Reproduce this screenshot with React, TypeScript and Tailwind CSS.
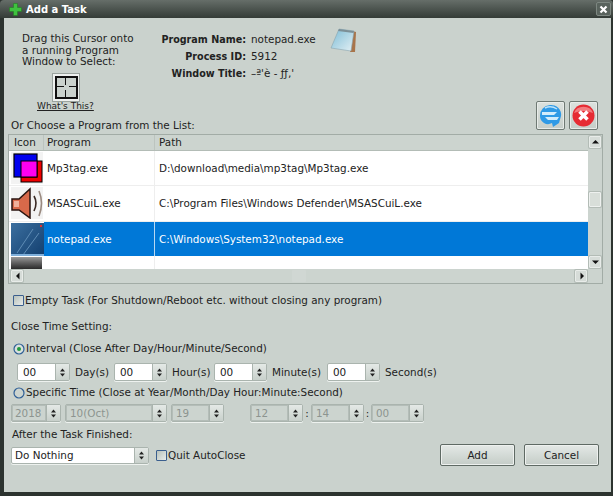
import React from "react";

const Updown = () => (
  <svg width="7" height="9" viewBox="0 0 7 9" className="block">
    <path d="M3.5 0.5 L6 3.5 H1 Z M3.5 8.5 L6 5.5 H1 Z" fill="#222" />
  </svg>
);

function Spin({ v, w, disabled, pad = "pl-[5px]", h = "h-[18px]" }: { v: string; w: string; disabled?: boolean; pad?: string; h?: string }) {
  return (
    <div className={`${w} ${h} flex shrink-0 rounded-[2px] border border-[#aab4ae] shadow-[0_1px_0_#eef2ef] ${disabled ? "bg-[#ccd4cf]" : "bg-white"}`}>
      <div className={`flex-1 flex items-center ${pad} ${disabled ? "text-[#8c9490] border border-[#b4bdb8]" : "text-[#222]"}`}>{v}</div>
      <div className="w-[14px] flex items-center justify-center bg-gradient-to-b from-[#e4e9e6] to-[#c8d0cb] border-l border-[#aab4ae]">
        <Updown />
      </div>
    </div>
  );
}

function Check({ className = "" }: { className?: string }) {
  return <div className={`w-[11px] h-[11px] shrink-0 border border-[#3a5f8e] bg-gradient-to-br from-[#b8c2bc] to-[#e8ecea] rounded-[1px] ${className}`} />;
}

function Radio({ on }: { on?: boolean }) {
  return (
    <svg width="12" height="12" viewBox="0 0 12 12" className="shrink-0">
      <circle cx="6" cy="6" r="5" fill={on ? "#d8e0dc" : "#ccd4cf"} stroke="#2f5f96" strokeWidth="1.2" />
      {on && <circle cx="6" cy="6" r="2" fill="#1f9a3c" />}
    </svg>
  );
}

const Grip = ({ d }: { d: "u" | "d" | "l" | "r" }) => {
  const p = { u: "M4.5 3 L8 6.5 H1 Z", d: "M4.5 7 L1 3.5 H8 Z", l: "M3 5 L6.5 1.5 V8.5 Z", r: "M7 5 L3.5 1.5 V8.5 Z" }[d];
  return (
    <svg width="9" height="10" viewBox="0 0 9 10">
      <path d={p} fill="#111" />
    </svg>
  );
};

const ScrollBtn = ({ d, className = "" }: { d: "u" | "d" | "l" | "r"; className?: string }) => (
  <div className={`w-[12px] h-[12px] shrink-0 flex items-center justify-center bg-[#d6dcd8] border border-[#e8ece9] shadow-[0_0_0_1px_#b3bcb6] rounded-[1px] ${className}`}>
    <Grip d={d} />
  </div>
);

function Mp3Icon() {
  return (
    <svg width="32" height="32" viewBox="0 0 32 32">
      <rect width="32" height="32" fill="#f3f3f3" />
      <rect x="10" y="9" width="21" height="21" fill="#f00000" stroke="#000" />
      <rect x="3" y="2" width="23" height="23" fill="#0000ee" stroke="#000" strokeWidth="1.2" />
      <rect x="10" y="9" width="16" height="16" fill="#ff00f0" stroke="#000" />
    </svg>
  );
}
function SpeakerIcon() {
  return (
    <svg width="32" height="32" viewBox="0 0 32 32">
      <rect width="32" height="32" fill="#f3f3f3" />
      <path d="M1 12 H8 L19 2 V31 L8 23 H1 Z" fill="#d8694a" stroke="#2a1510" strokeWidth="1.5" />
      <path d="M3 14 H8 V20 H3 Z" fill="#f0b09a" />
      <path d="M23 9 Q27 16 23 24" fill="none" stroke="#3a2a24" strokeWidth="1.6" />
      <path d="M28 4 Q33 16 28 29" fill="none" stroke="#9a8a80" strokeWidth="1.6" />
    </svg>
  );
}
function NoteBlue() {
  return (
    <svg width="33" height="34" viewBox="0 0 33 34">
      <defs>
        <linearGradient id="nb" x1="0" y1="0" x2="1" y2="1">
          <stop offset="0" stopColor="#3b6f9f" />
          <stop offset="1" stopColor="#123e6e" />
        </linearGradient>
      </defs>
      <rect width="33" height="34" fill="url(#nb)" />
      <path d="M6 30 L22 6 M12 32 L28 10" stroke="#5f8db6" strokeWidth="1" fill="none" />
      <rect x="0" y="31" width="33" height="3" fill="#7fb0dc" />
      <rect x="29" y="2" width="2" height="2" fill="#e03030" />
    </svg>
  );
}
function Notepad() {
  return (
    <svg width="28" height="26" viewBox="0 0 28 26">
      <defs>
        <linearGradient id="np" x1="0" y1="0" x2="1" y2="1">
          <stop offset="0" stopColor="#7cbcd6" />
          <stop offset="1" stopColor="#e4f0f4" />
        </linearGradient>
      </defs>
      <path d="M22 3 L26 4 L25 24 L20 24 Z" fill="#a8744a" />
      <path d="M9 1 L24 3 L21 23 L1 20 Z" fill="url(#np)" stroke="#8aa4ae" strokeWidth="0.6" />
      <path d="M9 1 L24 3 L23.5 5 L8 3 Z" fill="#7c8f96" />
    </svg>
  );
}
function RefreshIcon() {
  return (
    <svg width="23" height="24" viewBox="0 0 23 24">
      <path d="M11 1 A10 9.5 0 0 1 22 12 L20 19 L14 23 L13 19 A8 8 0 0 1 1 12 A10.5 10.5 0 0 1 11 1 Z" fill="#2f9ae6" />
      <path d="M3 8 H18 L15 11 H3 Z M20 13 H6 L9 16 H18 Z" fill="#d2ecfb" />
      <path d="M6 4 Q12 1 18 5" stroke="#bfe4fa" strokeWidth="1.4" fill="none" />
    </svg>
  );
}
function CloseIcon() {
  return (
    <svg width="23" height="23" viewBox="0 0 23 23">
      <circle cx="11.5" cy="11.5" r="11" fill="#e62b33" />
      <path d="M2 9 A10 9 0 0 1 21 9 Q11 5 2 9Z" fill="#f27c7f" />
      <path d="M7.5 7.5 L15.5 15.5 M15.5 7.5 L7.5 15.5" stroke="#fff" strokeWidth="3.6" />
    </svg>
  );
}

const ToolBtn = ({ children }: { children: React.ReactNode }) => (
  <div className="w-[29px] h-[29px] flex items-center justify-center rounded-[2px] border border-[#6f7a74] bg-gradient-to-b from-[#dce2de] to-[#c6cec9] shadow-[inset_0_0_0_1px_#e8ece9]">
    {children}
  </div>
);

const Row = ({ icon, name, path, sel, h }: { icon: React.ReactNode; name: string; path: string; sel?: boolean; h: string }) => (
  <div className={`${h} flex items-stretch ${sel ? "bg-[#0078d7] text-white" : "border-b border-[#eeeeee]"}`}>
    <div className="w-[35px] pl-[2px] pt-[1px] overflow-hidden bg-white shrink-0">{icon}</div>
    <div className={`w-[111px] pl-[3px] flex items-center border-r ${sel ? "border-[#b8d8f2]" : "border-[#eeeeee]"}`}>{name}</div>
    <div className="pl-[4px] flex items-center">{path}</div>
  </div>
);

const Btn = ({ t, w }: { t: string; w: string }) => (
  <div className={`${w} h-[22px] flex items-center justify-center rounded-[2px] border border-[#5f6a64] bg-gradient-to-b from-[#e4e9e6] to-[#c4ccc7] shadow-[inset_0_0_0_1px_#eef1ef] text-[#222]`}>{t}</div>
);

export default function App() {
  return (
    <div className="w-[613px] h-[496px] bg-[#2c332f] flex flex-col text-[10.4px] leading-[13px] text-[#222] overflow-hidden" style={{ fontFamily: '"DejaVu Sans", sans-serif' }}>
      <div className="h-[18px] shrink-0 flex items-center justify-between pl-[9px] pr-[3px] bg-gradient-to-b from-[#666e69] to-[#343c37] rounded-t-[4px]">
        <div className="flex items-center gap-[4px] font-bold text-white text-[10px]">
          <svg width="13" height="13" viewBox="0 0 13 13">
            <path d="M4.5 0.5 H8.5 V4.5 H12.5 V8.5 H8.5 V12.5 H4.5 V8.5 H0.5 V4.5 H4.5 Z" fill="#3fc13f" stroke="#1d7a1d" strokeWidth="0.5" />
          </svg>
          <span>Add a Task</span>
        </div>
        <div className="w-[15px] h-[14px] flex items-center justify-center bg-[#59635d] border border-[#7d8781] rounded-[2px] mr-[-1px]">
          <svg width="9" height="9" viewBox="0 0 9 9">
            <path d="M1.5 1.5 L7.5 7.5 M7.5 1.5 L1.5 7.5" stroke="#fff" strokeWidth="2.2" />
          </svg>
        </div>
      </div>

      <div className="flex-1 mx-[4px] mb-[4px] mr-[2px] bg-[#cad2cd] flex flex-col">
        <div className="h-[101px] flex relative shrink-0">
          <div className="w-[135px] pl-[18px] pt-[15px] shrink-0">
            <div className="leading-[11.5px] whitespace-nowrap">
              Drag this Cursor onto
              <br />
              a running Program
              <br />
              Window to Select:
            </div>
            <div className="ml-[30px] mt-[5px] w-[28px] h-[29px] flex items-center justify-center bg-[#eef1ef] border border-[#9aa39e]">
              <div className="w-[23px] h-[23px] border-2 border-[#111] relative bg-[#cad2cd]">
                <div className="absolute left-[8px] top-0 h-[7px] w-px bg-[#111]" />
                <div className="absolute left-[8px] bottom-0 h-[7px] w-px bg-[#111]" />
                <div className="absolute top-[8px] left-0 w-[7px] h-px bg-[#111]" />
                <div className="absolute top-[8px] right-0 w-[7px] h-px bg-[#111]" />
              </div>
            </div>
            <div className="ml-[15px] mt-[-1px] text-[9px] leading-[11px] underline whitespace-nowrap">What's This?</div>
          </div>
          <div className="pt-[13px] flex gap-[5px] ml-[4px]">
            <div className="w-[103px] font-bold text-[9.6px] text-right leading-[17px] whitespace-nowrap">
              <div>Program Name:</div>
              <div>Process ID:</div>
              <div>Window Title:</div>
            </div>
            <div className="leading-[17px] whitespace-nowrap w-[74px]">
              <div>notepad.exe</div>
              <div>5912</div>
              <div>–ª'è - ƒƒ‚'</div>
            </div>
          </div>
          <div className="pt-[10px] ml-[5px]">
            <Notepad />
          </div>
          <div className="absolute right-[13px] top-[83px] flex gap-[4px]">
            <ToolBtn>
              <RefreshIcon />
            </ToolBtn>
            <ToolBtn>
              <CloseIcon />
            </ToolBtn>
          </div>
        </div>

        <div className="pl-[7px] h-[15px] flex items-start">Or Choose a Program from the List:</div>

        <div className="ml-[4px] mr-[8px] h-[150px] border border-[#a2aca6] shrink-0 flex overflow-hidden bg-[#ccd4cf]">
          <div className="flex-1 min-w-0 flex flex-col">
            <div className="h-[16px] shrink-0 flex items-center border-b border-[#b3bcb6]">
              <div className="w-[35px] pl-[5px] border-r border-[#bcc4bf] h-full flex items-center">Icon</div>
              <div className="w-[111px] pl-[3px] border-r border-[#bcc4bf] h-full flex items-center">Program</div>
              <div className="pl-[4px]">Path</div>
            </div>
            <div className="h-[118px] bg-white overflow-hidden shrink-0">
              <Row h="h-[35px]" icon={<Mp3Icon />} name="Mp3tag.exe" path="D:\download\media\mp3tag\Mp3tag.exe" />
              <Row h="h-[36px]" icon={<SpeakerIcon />} name="MSASCuiL.exe" path="C:\Program Files\Windows Defender\MSASCuiL.exe" />
              <Row h="h-[34px]" icon={<NoteBlue />} name="notepad.exe" path="C:\Windows\System32\notepad.exe" sel />
              <div className="h-[13px] flex">
                <div className="w-[35px] pl-[2px] pt-[1px] overflow-hidden">
                  <div className="w-[31px] h-[13px] bg-gradient-to-b from-[#9a9a9a] to-[#222]" />
                </div>
                <div className="w-[111px] border-r border-[#eeeeee]" />
              </div>
            </div>
            <div className="h-[14px] flex items-center gap-[1px] pl-[2px] pr-[1px]">
              <ScrollBtn d="l" />
              <div className="flex-1 flex justify-center">
                <div className="w-[14px] h-[12px] rounded-[1px] bg-[#d0d7d3]" />
              </div>
              <ScrollBtn d="r" />
            </div>
          </div>
          <div className="w-[14px] shrink-0 flex flex-col items-center pt-[1px] pb-[15px]">
            <ScrollBtn d="u" />
            <div className="w-[12px] h-[15px] mt-[44px] bg-[#d8ded9] border border-[#eef1ef] shadow-[0_0_0_1px_#b3bcb6] rounded-[1px]" />
            <ScrollBtn d="d" className="mt-auto" />
          </div>
        </div>

        <div className="mt-[10px] ml-[9px] flex items-center gap-[1px] h-[13px]">
          <Check />
          <span className="whitespace-nowrap">Empty Task (For Shutdown/Reboot etc. without closing any program)</span>
        </div>

        <div className="mt-[13px] ml-[7px] h-[13px]">Close Time Setting:</div>

        <div className="mt-[9px] ml-[9px] flex items-center h-[13px] gap-[1px]">
          <Radio on />
          <span className="whitespace-nowrap">Interval (Close After Day/Hour/Minute/Second)</span>
        </div>

        <div className="mt-[8px] ml-[13px] flex items-center">
          <Spin v="00" w="w-[53px]" />
          <span className="ml-[5px] w-[39px]">Day(s)</span>
          <Spin v="00" w="w-[53px]" />
          <span className="ml-[5px] w-[42px]">Hour(s)</span>
          <Spin v="00" w="w-[53px]" />
          <span className="ml-[5px] w-[55px]">Minute(s)</span>
          <Spin v="00" w="w-[53px]" />
          <span className="ml-[5px]">Second(s)</span>
        </div>

        <div className="mt-[5px] ml-[9px] flex items-center h-[13px] gap-[1px]">
          <Radio />
          <span className="whitespace-nowrap">Specific Time (Close at Year/Month/Day Hour:Minute:Second)</span>
        </div>

        <div className="mt-[5px] ml-[7px] flex items-center">
          <Spin v="2018" w="w-[50px]" disabled pad="pl-[2px]" />
          <Spin v="10(Oct)" w="w-[102px]" disabled pad="pl-[3px]" h="h-[18px] ml-[4px]" />
          <Spin v="19" w="w-[53px]" disabled pad="pl-[3px]" h="h-[18px] ml-[4px]" />
          <Spin v="12" w="w-[53px]" disabled pad="pl-[3px]" h="h-[18px] ml-[26px]" />
          <span className="w-[8px] text-center">:</span>
          <Spin v="14" w="w-[53px]" disabled pad="pl-[3px]" />
          <span className="w-[7px] text-center">:</span>
          <Spin v="00" w="w-[53px]" disabled pad="pl-[3px]" />
        </div>

        <div className="flex flex-1 relative">
          <div className="flex flex-col">
            <div className="mt-[6px] ml-[8px] h-[13px] whitespace-nowrap">After the Task Finished:</div>
            <div className="mt-[6px] ml-[7px] flex items-center">
              <Spin v="Do Nothing" w="w-[138px]" pad="pl-[3px]" h="h-[17px]" />
              <Check className="ml-[7px]" />
              <span className="ml-[1px] whitespace-nowrap">Quit AutoClose</span>
            </div>
          </div>
          <div className="absolute right-[12px] top-[22px] flex gap-[9px]">
            <Btn t="Add" w="w-[75px]" />
            <Btn t="Cancel" w="w-[75px]" />
          </div>
        </div>
      </div>
    </div>
  );
}
